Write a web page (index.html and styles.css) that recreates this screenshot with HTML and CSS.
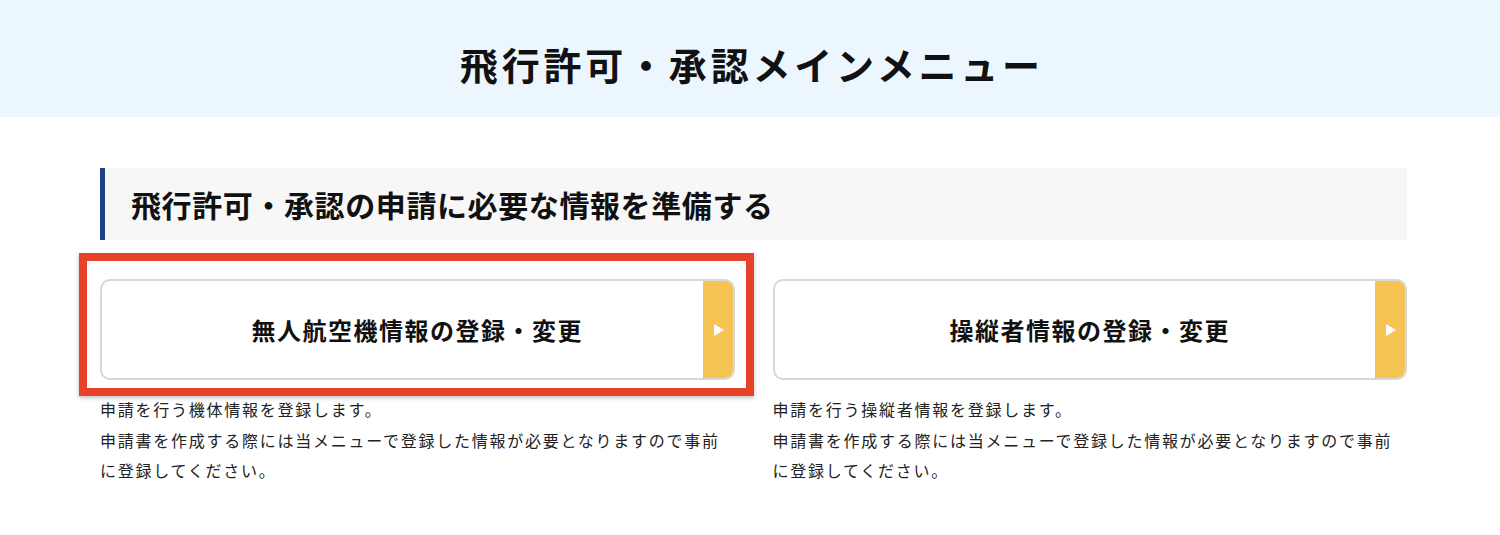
FILE: index.html
```html
<!DOCTYPE html>
<html lang="ja">
<head>
<meta charset="utf-8">
<title>飛行許可・承認メインメニュー</title>
<link rel="stylesheet" href="styles.css">
</head>
<body>
<header class="page-header">
  <h1 class="page-title">飛行許可・承認メインメニュー</h1>
</header>
<main class="content">
  <h2 class="section-heading">飛行許可・承認の申請に必要な情報を準備する</h2>
  <div class="menu-grid">
    <div class="menu-item">
      <div class="card-wrap">
        <a class="card" href="#">
          <span class="card-label">無人航空機情報の登録・変更</span>
          <span class="card-tab"><span class="arrow"></span></span>
        </a>
        <div class="highlight"></div>
      </div>
      <p class="desc">申請を行う機体情報を登録します。<br>申請書を作成する際には当メニューで登録した情報が必要となりますので事前に登録してください。</p>
    </div>
    <div class="menu-item">
      <div class="card-wrap">
        <a class="card" href="#">
          <span class="card-label">操縦者情報の登録・変更</span>
          <span class="card-tab"><span class="arrow"></span></span>
        </a>
      </div>
      <p class="desc">申請を行う操縦者情報を登録します。<br>申請書を作成する際には当メニューで登録した情報が必要となりますので事前に登録してください。</p>
    </div>
  </div>
</main>
</body>
</html>
```

FILE: styles.css
```css
* { box-sizing: border-box; }
html, body {
  margin: 0;
  padding: 0;
  background: #ffffff;
  font-family: "Noto Sans CJK JP", "Noto Sans", "Liberation Sans", sans-serif;
  color: #1a1a1a;
}
.page-header {
  background: #ecf6fe;
  height: 117px;
  display: flex;
  align-items: center;
  justify-content: center;
}
.page-title {
  margin: 0;
  font-size: 38px;
  font-weight: 700;
  letter-spacing: 0.1em;
  color: #111;
  line-height: 1;
  padding-left: 0.1em;
  padding-top: 10px;
}
.content {
  width: 1307px;
  margin: 51px 0 0 100px;
}
.section-heading {
  margin: 0;
  height: 72px;
  display: flex;
  align-items: center;
  background: #f7f7f7;
  border-left: 5px solid #1f3f86;
  padding-left: 26px;
  font-size: 30px;
  font-weight: 700;
  letter-spacing: 0.6px;
  color: #111;
  line-height: 1;
}
.menu-grid {
  display: grid;
  grid-template-columns: 1fr 1fr;
  column-gap: 38px;
  margin-top: 39px;
}
.card-wrap {
  position: relative;
}
.card {
  display: grid;
  grid-template-columns: 1fr 30px;
  height: 101px;
  border: 2px solid #d8d8d8;
  border-radius: 10px;
  overflow: hidden;
  background: #fff;
  text-decoration: none;
  color: #111;
}
.card-label {
  grid-column: 1 / -1;
  grid-row: 1;
  display: flex;
  align-items: center;
  justify-content: center;
  font-size: 24px;
  font-weight: 700;
  letter-spacing: 1.5px;
}
.card-tab {
  grid-column: 2;
  grid-row: 1;
  background: #f5c452;
  display: flex;
  align-items: center;
  justify-content: center;
}
.arrow {
  width: 0;
  height: 0;
  border-top: 6px solid transparent;
  border-bottom: 6px solid transparent;
  border-left: 10px solid #fff;
  margin-left: 2px;
}
.highlight {
  position: absolute;
  left: -21px;
  top: -26px;
  width: 675px;
  height: 143px;
  border: 8px solid #e8412a;
  box-shadow: 0 2px 4px rgba(0, 0, 0, 0.25);
  pointer-events: none;
}
.desc {
  margin: 14px 0 0 0;
  font-size: 16px;
  line-height: 30.5px;
  letter-spacing: 1.75px;
  color: #222;
}
```
